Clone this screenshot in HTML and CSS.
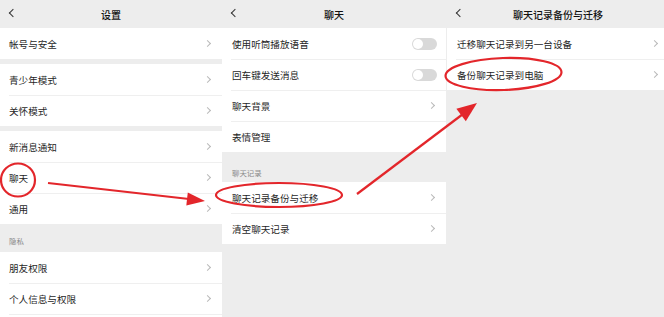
FILE: index.html
```html
<!DOCTYPE html>
<html lang="zh-CN">
<head>
    <meta charset="UTF-8" />
    <meta name="viewport" content="width=device-width, initial-scale=1.0"/>
    <title>聊天记录备份与迁移</title>
    <link rel="stylesheet" href="styles.css">
</head>
<body>
    <div class="screens">

        <!-- SCREEN 1: 设置 -->
        <section class="screen screen-settings">
            <div class="topbar">
                <span class="back"></span>
                <h2>设置</h2>
            </div>
            <div class="group">
                <div class="row"><span>帐号与安全</span><span class="chev"></span></div>
            </div>
            <div class="group">
                <div class="row"><span>青少年模式</span><span class="chev"></span></div>
                <div class="row"><span>关怀模式</span><span class="chev"></span></div>
            </div>
            <div class="group">
                <div class="row"><span>新消息通知</span><span class="chev"></span></div>
                <div class="row"><span>聊天</span><span class="chev"></span></div>
                <div class="row"><span>通用</span><span class="chev"></span></div>
            </div>
            <div class="label label-tall">隐私</div>
            <div class="group">
                <div class="row"><span>朋友权限</span><span class="chev"></span></div>
                <div class="row"><span>个人信息与权限</span><span class="chev"></span></div>
                <div class="row"></div>
            </div>
        </section>

        <!-- SCREEN 2: 聊天 -->
        <section class="screen screen-chat">
            <div class="topbar">
                <span class="back"></span>
                <h2>聊天</h2>
            </div>
            <div class="group">
                <div class="row"><span>使用听筒播放语音</span><span class="switch"></span></div>
                <div class="row"><span>回车键发送消息</span><span class="switch"></span></div>
                <div class="row"><span>聊天背景</span><span class="chev"></span></div>
                <div class="row"><span>表情管理</span></div>
            </div>
            <div class="label">聊天记录</div>
            <div class="group">
                <div class="row"><span>聊天记录备份与迁移</span><span class="chev"></span></div>
                <div class="row"><span>清空聊天记录</span><span class="chev"></span></div>
            </div>
        </section>

        <!-- SCREEN 3: 聊天记录备份与迁移 -->
        <section class="screen screen-backup">
            <div class="topbar">
                <span class="back"></span>
                <h2>聊天记录备份与迁移</h2>
            </div>
            <div class="group">
                <div class="row"><span>迁移聊天记录到另一台设备</span><span class="chev"></span></div>
                <div class="row"><span>备份聊天记录到电脑</span><span class="chev"></span></div>
            </div>
        </section>
    </div>

    <!-- RED MARKS -->
    <svg class="marks" width="664" height="317" viewBox="0 0 664 317">
        <g fill="none" stroke="#e3262b" stroke-width="2.2">
            <ellipse cx="18" cy="180" rx="17" ry="16.5"/>
            <ellipse cx="279" cy="195" rx="63" ry="12"/>
            <ellipse cx="503.5" cy="74" rx="58" ry="16" transform="rotate(-2 503.5 74)"/>
            <line x1="48" y1="183" x2="189" y2="199"/>
            <line x1="357" y1="194" x2="463" y2="114"/>
        </g>
        <g fill="#e3262b">
            <polygon points="205,201 187.8,192.5 186.3,205.5"/>
            <polygon points="477,103 465.8,121.2 456.4,108.8"/>
        </g>
    </svg>
</body>
</html>
```

FILE: styles.css
```css
* {
    margin: 0;
    padding: 0;
    box-sizing: border-box;
}

body {
    width: 664px;
    height: 317px;
    overflow: hidden;
    background: #ededed;
    color: #1f1f1f;
    font-family: "Noto Sans CJK SC", "Noto Sans", sans-serif;
    position: relative;
}

.screens {
    display: flex;
    height: 317px;
}

.screen {
    background: #ededed;
    flex-shrink: 0;
    overflow: hidden;
}

.screen-settings {
    width: 222px;
}

.screen-chat {
    width: 224px;
}

.screen-backup {
    width: 222px;
    margin-left: 1px;
}

.topbar {
    height: 28px;
    position: relative;
    display: flex;
    align-items: center;
    justify-content: center;
}

.topbar h2 {
    font-size: 10px;
    font-weight: 500;
    color: #111;
}

.back {
    position: absolute;
    left: 10px;
    top: 10px;
    width: 6px;
    height: 6px;
    border-left: 1.2px solid #333;
    border-bottom: 1.2px solid #333;
    transform: rotate(45deg);
}

.group {
    background: white;
    margin-bottom: 5px;
}

.row {
    height: 31px;
    padding: 0 9px 0 10px;
    display: flex;
    align-items: center;
    justify-content: space-between;
    font-size: 9.6px;
    position: relative;
}

.screen-settings .row {
    padding-left: 9px;
}

.row + .row::before {
    content: "";
    position: absolute;
    top: 0;
    left: 9px;
    right: 0;
    border-top: 1px solid #efefef;
}

.chev {
    width: 5px;
    height: 5px;
    margin-right: 3px;
    border-top: 1px solid #b9b9b9;
    border-right: 1px solid #b9b9b9;
    transform: rotate(45deg);
}

.switch {
    width: 25px;
    height: 12px;
    border-radius: 6px;
    background: #d9d9d9;
    position: relative;
}

.switch::after {
    content: "";
    position: absolute;
    left: 1px;
    top: 1px;
    width: 10px;
    height: 10px;
    border-radius: 50%;
    background: white;
}

.screen-chat .group:first-of-type {
    margin-bottom: 0;
}

.label {
    height: 25px;
    padding: 0 10px 4px;
    display: flex;
    align-items: flex-end;
    font-size: 7.4px;
    color: #8a8a8a;
}

.label-tall {
    height: 28px;
    margin-top: -5px;
    padding-left: 9px;
    padding-bottom: 6px;
}

.marks {
    position: absolute;
    left: 0;
    top: 0;
}
```
